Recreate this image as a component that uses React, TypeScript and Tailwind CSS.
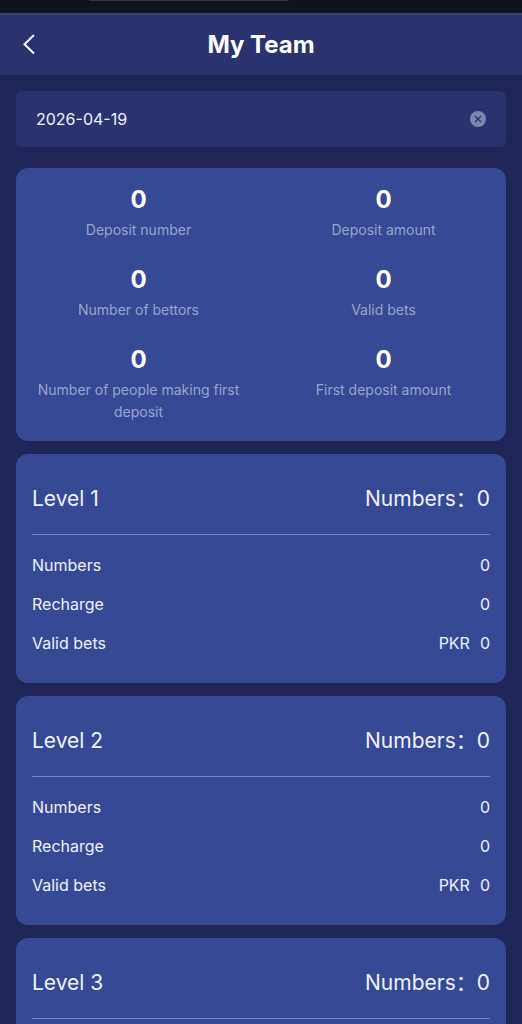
import { useState } from "react";

const stats = [
  { label: "Deposit number", value: 0 },
  { label: "Deposit amount", value: 0 },
  { label: "Number of bettors", value: 0 },
  { label: "Valid bets", value: 0 },
  { label: "Number of people making first deposit", value: 0 },
  { label: "First deposit amount", value: 0 },
];

const levels = [1, 2, 3];

function Row({ label, value, unit }: { label: string; value: number; unit?: string }) {
  return (
    <div className="flex justify-between">
      <dt>{label}</dt>
      <dd className="flex gap-2.5">
        {unit && <span>{unit}</span>}
        <span>{value}</span>
      </dd>
    </div>
  );
}

function LevelCard({ level }: { level: number }) {
  return (
    <section className="rounded-xl bg-[#374994] px-4 pb-7 text-[#eef1fd]">
      <div className="flex h-[81px] items-center justify-between border-b border-[#7683ba] pt-2.5 text-[21px] leading-8">
        <h2>Level {level}</h2>
        <p className="flex">
          <span>Numbers：</span>
          <span>0</span>
        </p>
      </div>
      <dl className="flex flex-col gap-[15px] pt-[18px] text-base leading-6">
        <Row label="Numbers" value={0} />
        <Row label="Recharge" value={0} />
        <Row label="Valid bets" value={0} unit="PKR" />
      </dl>
    </section>
  );
}

export default function App() {
  const [date, setDate] = useState("2026-04-19");

  return (
    <div className="h-screen overflow-y-auto bg-[#20265a] pb-4 font-['Inter','Noto_Sans_CJK_SC',sans-serif] [scrollbar-width:none]">
      <div className="flex h-[13px] justify-center bg-[#0f141c] pr-36">
        <div className="h-px w-50 rounded-b-full bg-[#30343b]" />
      </div>
      <header className="grid h-[62px] grid-cols-[1fr_auto_1fr] items-center border-t-2 border-[#3b4268] bg-[#2a326f] px-4 text-white">
        <button type="button" aria-label="Back" className="flex size-7 items-center justify-center">
          <svg viewBox="0 0 28 28" className="size-7" fill="none" stroke="currentColor" strokeWidth="2">
            <path d="M18 4 8.5 13.2l9.5 9.3" />
          </svg>
        </button>
        <h1 className="text-2xl font-bold">My Team</h1>
      </header>
      <main className="px-4 pt-4">
        <div className="mb-[21px] flex h-14 items-center rounded-md bg-[#2a326f] px-5">
          <input
            aria-label="Date"
            value={date}
            onChange={(e) => setDate(e.target.value)}
            className="min-w-0 flex-1 bg-transparent text-base leading-6 text-[#eef1fd] outline-none"
          />
          <button type="button" aria-label="Clear date" onClick={() => setDate("")}>
            <svg viewBox="0 0 16 16" className="size-4">
              <circle cx="8" cy="8" r="8" fill="#8086b0" />
              <path d="m5 5 6 6M11 5l-6 6" stroke="#2a326f" strokeWidth="1.3" fill="none" />
            </svg>
          </button>
        </div>
        <div className="flex flex-col gap-[13px]">
          <dl className="grid grid-cols-2 gap-y-[25px] rounded-xl bg-[#374994] py-[18px] text-center">
            {stats.map((s) => (
              <div key={s.label} className="flex flex-col-reverse justify-end gap-[5px] px-5">
                <dt className="text-sm leading-[22px] text-[#99a2ce]">{s.label}</dt>
                <dd className="text-2xl leading-7 font-bold text-white">{s.value}</dd>
              </div>
            ))}
          </dl>
          {levels.map((level) => (
            <LevelCard key={level} level={level} />
          ))}
        </div>
      </main>
    </div>
  );
}
